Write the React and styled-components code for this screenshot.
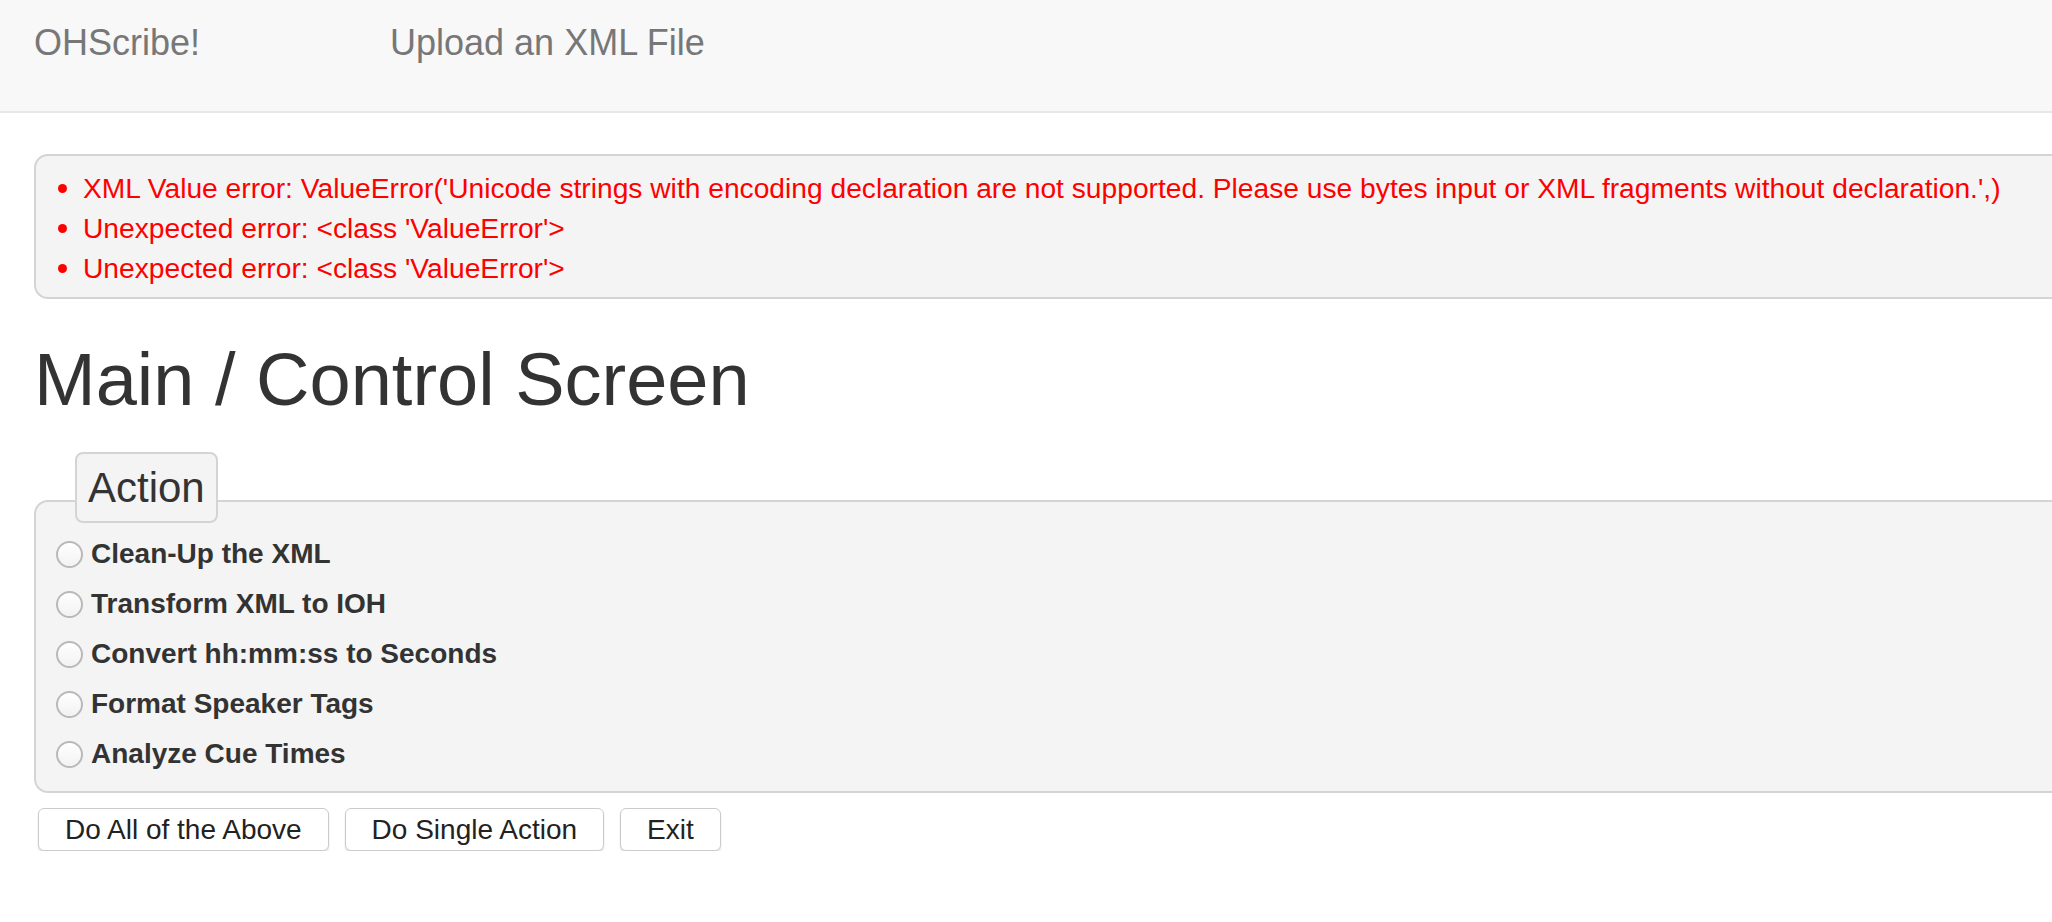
import React from 'react';
import styled, { createGlobalStyle } from 'styled-components';

const GlobalStyle = createGlobalStyle`
  html, body {
    margin: 0;
    padding: 0;
    background: #fff;
    overflow: hidden;
  }
  body {
    font-family: "Liberation Sans", Arial, Helvetica, sans-serif;
    color: #333;
  }
`

const Navbar = styled.nav`
  display: flex;
  align-items: flex-start;
  height: 113px;
  padding: 21px 34px 0;
  background: #f8f8f8;
  border-bottom: 2px solid #e7e7e7;
  box-sizing: border-box;
`

const NavItem = styled.a`
  font-size: 36px;
  line-height: 44px;
  color: #777;
  text-decoration: none;
  width: ${props => props.width || 'auto'};
`

const Page = styled.main`
  width: 2300px;
  padding: 0 34px;
`

const Alert = styled.ul`
  list-style: none;
  margin: 41px 0 0;
  padding: 12px 0 9px 26px;
  background: #f4f4f4;
  border: 2px solid #d4d4d4;
  border-radius: 14px;
`

const ErrorItem = styled.li`
  position: relative;
  padding-left: 21px;
  font-size: 28.2px;
  line-height: 40px;
  color: #f00;

  &::before {
    content: '';
    position: absolute;
    left: -4px;
    top: 16px;
    width: 9px;
    height: 9px;
    border-radius: 50%;
    background: #f00;
  }
`

const Title = styled.h1`
  margin: 40px 0 0;
  font-size: 74px;
  line-height: 82px;
  font-weight: 500;
  color: #333;
`

const Fieldset = styled.section`
  display: flex;
  flex-direction: column;
  margin-top: 31px;
`

const Legend = styled.div`
  position: relative;
  z-index: 1;
  align-self: flex-start;
  margin: 0 0 -23px 41px;
  padding: 2px 11px;
  font-size: 42px;
  line-height: 63px;
  color: #333;
  background: #f4f4f4;
  border: 2px solid #d4d4d4;
  border-radius: 8px;
`

const Panel = styled.div`
  display: flex;
  flex-direction: column;
  padding: 27px 0 12px 20px;
  background: #f4f4f4;
  border: 2px solid #d4d4d4;
  border-radius: 14px;
`

const Option = styled.label`
  display: flex;
  align-items: center;
  gap: 8px;
  height: 50px;
  font-size: 28px;
  font-weight: bold;
  color: #333;
`

const Radio = styled.input.attrs({ type: 'radio', name: 'action' })`
  appearance: none;
  margin: 0;
  width: 27px;
  height: 27px;
  border-radius: 50%;
  border: 2px solid #b9b9b9;
  background: linear-gradient(#fff, #f2f2f2);
  box-sizing: border-box;
`

const Buttons = styled.div`
  display: flex;
  gap: 16px;
  margin: 15px 0 0 4px;
`

const Button = styled.button`
  height: 43px;
  padding: 0 26px;
  font-family: "Liberation Sans", Arial, sans-serif;
  font-size: 28px;
  color: #222;
  background: #fff;
  border: 1px solid #cbcbcb;
  border-radius: 6px;
  box-shadow: 0 2px 2px rgba(0, 0, 0, 0.12);
`

const errors = [
  "XML Value error: ValueError('Unicode strings with encoding declaration are not supported. Please use bytes input or XML fragments without declaration.',)",
  "Unexpected error: <class 'ValueError'>",
  "Unexpected error: <class 'ValueError'>"
]

const actions = [
  'Clean-Up the XML',
  'Transform XML to IOH',
  'Convert hh:mm:ss to Seconds',
  'Format Speaker Tags',
  'Analyze Cue Times'
]

export default function App() {
  return (
    <>
      <GlobalStyle />
      <Navbar>
        <NavItem href="#" width="356px">OHScribe!</NavItem>
        <NavItem href="#">Upload an XML File</NavItem>
      </Navbar>
      <Page>
        <Alert>
          {errors.map((e, i) => <ErrorItem key={i}>{e}</ErrorItem>)}
        </Alert>
        <Title>Main / Control Screen</Title>
        <Fieldset>
          <Legend>Action</Legend>
          <Panel>
            {actions.map(a => (
              <Option key={a}>
                <Radio value={a} />
                {a}
              </Option>
            ))}
          </Panel>
        </Fieldset>
        <Buttons>
          <Button>Do All of the Above</Button>
          <Button>Do Single Action</Button>
          <Button>Exit</Button>
        </Buttons>
      </Page>
    </>
  )
}
